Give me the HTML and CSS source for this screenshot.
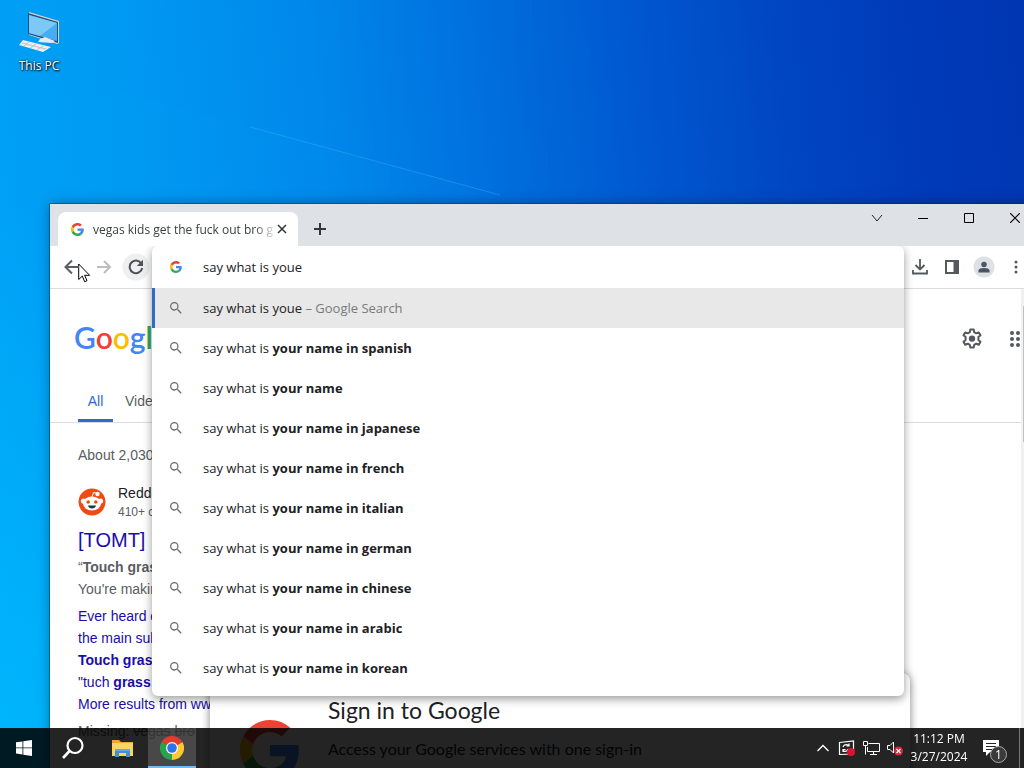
FILE: index.html
```html
<!DOCTYPE html>
<html lang="en">
<head>
  <meta charset="UTF-8">
  <meta name="viewport" content="width=device-width, initial-scale=1.0">
  <title>Desktop</title>
  <link rel="stylesheet" href="styles.css">
</head>
<body>
  <!-- Shared icons -->
  <svg class="defs" width="0" height="0" aria-hidden="true">
    <symbol id="g-logo" viewBox="0 0 48 48">
      <path fill="#EA4335" d="M24 9.5c3.5 0 6.700 1.200 9.200 3.600l6.900-6.900C35.900 2.400 30.500 0 24 0 14.600 0 6.500 5.400 2.600 13.200l8 6.200C12.400 13.700 17.700 9.500 24 9.500z"/>
      <path fill="#4285F4" d="M47 24.500c0-1.600-.2-3.100-.4-4.500H24v9h12.900c-.6 3-2.200 5.500-4.700 7.200l7.700 6C44.400 38 47 31.800 47 24.500z"/>
      <path fill="#FBBC05" d="M10.500 28.600a14.500 14.500 0 0 1 0-9.200l-8-6.200a24 24 0 0 0 0 21.600l8-6.200z"/>
      <path fill="#34A853" d="M24 48c6.500 0 11.900-2.100 15.900-5.800l-7.700-6c-2.200 1.500-4.900 2.300-8.200 2.300-6.300 0-11.600-4.200-13.500-9.900l-8 6.200C6.500 42.600 14.600 48 24 48z"/>
    </symbol>
    <symbol id="magnifier" viewBox="0 0 24 24">
      <path fill="#6b6f73" d="M15.500 14h-.8l-.3-.3A6.500 6.500 0 1 0 13.700 14.400l.3.300v.8l5 5 1.500-1.500-5-5zm-6 0a4.500 4.500 0 1 1 0-9 4.500 4.500 0 0 1 0 9z"/>
    </symbol>
  </svg>

  <!-- Faint light beam in the wallpaper -->
  <svg class="beam" viewBox="0 0 1024 768" preserveAspectRatio="none" aria-hidden="true">
    <path d="M250 127L500 195" stroke="#5cc4ff" stroke-opacity=".3"/>
    <path d="M100 86L500 195H0V59z" fill="#00b0ff" fill-opacity=".06"/>
  </svg>

  <a class="desktop-icon" href="#">
    <svg width="44" height="44" viewBox="0 0 44 44" aria-hidden="true">
      <path d="M12 1l30 9v22l-2 1L12 24z" fill="#d8d4c8"/>
      <path d="M11 2l30 9v21L11 23z" fill="#1d4f86"/>
      <path d="M12 4l28 8v18L12 22z" fill="#45adf0"/>
      <path d="M12 4l28 8-17 13-11-3z" fill="#7cc8f6"/>
      <path d="M23 28l5-2 10 4-3 2-14-1z" fill="#e9eaec"/>
      <path d="M6 29l28 7-8 5-24-7z" fill="#eceff1"/>
      <path d="M5 32l24 6M12 31l-5 4M19 33l-6 4M26 35l-6 4" stroke="#b9c4cd" fill="none"/>
    </svg>
    <span>This PC</span>
  </a>

  <main class="window">
    <header class="tab-strip">
      <div class="tab">
        <svg width="13" height="13"><use href="#g-logo"/></svg>
        <span class="tab-title">vegas kids get the fuck out bro g</span>
        <button class="tab-close" aria-label="Close tab">
          <svg width="10" height="10" viewBox="0 0 10 10"><path d="M1 1l8 8M9 1l-8 8" stroke="#2f3236" stroke-width="1.500"/></svg>
        </button>
      </div>
      <button class="new-tab" aria-label="New tab">
        <svg width="12" height="12" viewBox="0 0 12 12"><path d="M6 0v12M0 6h12" stroke="#33363a" stroke-width="2"/></svg>
      </button>
      <div class="window-buttons">
        <button aria-label="Search tabs"><svg width="12" height="12" viewBox="0 0 12 12"><path d="M1 3l5 6 5-6" fill="none" stroke="#222"/></svg></button>
        <button aria-label="Minimize"><svg width="10" height="10" viewBox="0 0 10 10"><path d="M0 5.500h10" stroke="#000"/></svg></button>
        <button aria-label="Maximize"><svg width="10" height="10" viewBox="0 0 10 10"><path d="M.5.5h9v9h-9z" fill="none" stroke="#000"/></svg></button>
        <button aria-label="Close"><svg width="10" height="10" viewBox="0 0 10 10"><path d="M0 0l10 10M10 0L0 10" stroke="#000" stroke-width="1.200"/></svg></button>
      </div>
    </header>

    <div class="toolbar">
      <button aria-label="Back"><svg width="16" height="16" viewBox="0 0 16 16"><path d="M15 8H2M8 1.500L1.500 8 8 14.500" fill="none" stroke="#5a5d61" stroke-width="2"/></svg></button>
      <button aria-label="Forward"><svg width="16" height="16" viewBox="0 0 16 16"><path d="M1 8h12M8 2l6 6-6 6" fill="none" stroke="#bbbdc0" stroke-width="2"/></svg></button>
      <button class="reload" aria-label="Reload"><svg width="16" height="16" viewBox="0 0 16 16"><path d="M13.200 4.300A6.300 6.300 0 1 0 14.200 9" fill="none" stroke="#4d5054" stroke-width="2"/><path d="M15 .8v6.200H8.800z" fill="#4d5054"/></svg></button>

      <div class="omnibox">
        <div class="popup">
          <div class="entry">
            <svg width="12" height="12"><use href="#g-logo"/></svg>
            <input type="text" aria-label="Search Google or type a URL" value="say what is youe">
          </div>
          <ul class="suggestions">
            <li><a class="selected" href="#"><svg width="16" height="16"><use href="#magnifier"/></svg><span>say what is youe <span class="hint">– Google Search</span></span></a></li>
            <li><a href="#"><svg width="16" height="16"><use href="#magnifier"/></svg><span>say what is <b>your name in spanish</b></span></a></li>
            <li><a href="#"><svg width="16" height="16"><use href="#magnifier"/></svg><span>say what is <b>your name</b></span></a></li>
            <li><a href="#"><svg width="16" height="16"><use href="#magnifier"/></svg><span>say what is <b>your name in japanese</b></span></a></li>
            <li><a href="#"><svg width="16" height="16"><use href="#magnifier"/></svg><span>say what is <b>your name in french</b></span></a></li>
            <li><a href="#"><svg width="16" height="16"><use href="#magnifier"/></svg><span>say what is <b>your name in italian</b></span></a></li>
            <li><a href="#"><svg width="16" height="16"><use href="#magnifier"/></svg><span>say what is <b>your name in german</b></span></a></li>
            <li><a href="#"><svg width="16" height="16"><use href="#magnifier"/></svg><span>say what is <b>your name in chinese</b></span></a></li>
            <li><a href="#"><svg width="16" height="16"><use href="#magnifier"/></svg><span>say what is <b>your name in arabic</b></span></a></li>
            <li><a href="#"><svg width="16" height="16"><use href="#magnifier"/></svg><span>say what is <b>your name in korean</b></span></a></li>
          </ul>
        </div>
      </div>

      <button aria-label="Downloads"><svg width="16" height="16" viewBox="0 0 16 16"><path d="M8 0v10M3.500 6L8 10.500 12.500 6M1 11v3.500h14V11" fill="none" stroke="#55585c" stroke-width="1.800"/></svg></button>
      <button aria-label="Side panel"><svg width="14" height="14" viewBox="0 0 14 14"><path d="M1 1h12v12H1z" fill="none" stroke="#55585c" stroke-width="2"/><path d="M8.500 1H13v12H8.500z" fill="#55585c"/></svg></button>
      <button class="profile" aria-label="Profile"><svg width="12" height="12" viewBox="0 0 14 14"><circle cx="7" cy="4" r="3.200" fill="#4b5563"/><path d="M.5 13.500v-2C.5 9 4 8.300 7 8.300s6.500.7 6.500 3.200v2z" fill="#4b5563"/></svg></button>
      <button aria-label="Menu"><svg width="4" height="14" viewBox="0 0 4 14"><circle cx="2" cy="2" r="1.500" fill="#55585c"/><circle cx="2" cy="7" r="1.500" fill="#55585c"/><circle cx="2" cy="12" r="1.500" fill="#55585c"/></svg></button>
    </div>

    <div class="viewport">
      <section class="page">
        <div class="page-header">
          <a class="google" href="#"><span class="blue">G</span><span class="red">o</span><span class="yellow">o</span><span class="blue">g</span><span class="green">l</span><span class="red">e</span></a>
          <div class="page-tools">
            <button aria-label="Settings"><svg width="22" height="22" viewBox="0 0 22 22"><path d="M9.300 1.500h3.400l.5 2.700 2 1.100 2.600-.9 1.700 2.900-2.100 1.800v2.900l2.100 1.700-1.700 3-2.600-1-2 1.200-.5 2.600H9.300l-.5-2.600-2-1.200-2.600 1-1.700-3L4.600 12V9.100L2.500 7.300l1.700-2.900 2.600.9 2-1.100z" fill="none" stroke="#55585c" stroke-width="2" stroke-linejoin="round"/><circle cx="11" cy="10.600" r="3.200" fill="#55585c"/></svg></button>
            <button aria-label="Google apps"><svg width="16" height="16" viewBox="0 0 16 16" fill="#55585c"><circle cx="2" cy="2" r="2"/><circle cx="8" cy="2" r="2"/><circle cx="14" cy="2" r="2"/><circle cx="2" cy="8" r="2"/><circle cx="8" cy="8" r="2"/><circle cx="14" cy="8" r="2"/><circle cx="2" cy="14" r="2"/><circle cx="8" cy="14" r="2"/><circle cx="14" cy="14" r="2"/></svg></button>
          </div>
        </div>
        <nav class="page-tabs">
          <a class="active" href="#">All</a>
          <a href="#">Videos</a>
        </nav>

        <div class="results">
          <p class="stats">About 2,030</p>
          <div class="source">
            <svg width="28" height="28" viewBox="0 0 28 28" aria-hidden="true">
              <circle cx="14" cy="14" r="13.500" fill="#f04a12"/>
              <path d="M14 9l1.500-4.500 4 1" fill="none" stroke="#fff"/>
              <circle cx="19.500" cy="6" r="2.200" fill="#fff"/>
              <circle cx="5.500" cy="13" r="2.600" fill="#fff"/>
              <circle cx="22.500" cy="13" r="2.600" fill="#fff"/>
              <ellipse cx="14" cy="15.500" rx="9" ry="7" fill="#fff"/>
              <circle cx="10.200" cy="14" r="1.800" fill="#f04a12"/>
              <circle cx="17.800" cy="14" r="1.800" fill="#f04a12"/>
              <path d="M10 17.500h8c-.5 4-7.500 4-8 0z" fill="#173b3f"/>
            </svg>
            <div>
              <div class="site">Reddit</div>
              <div class="meta">410+ comments</div>
            </div>
          </div>
          <h3><a href="#">[TOMT]</a></h3>
          <p class="snippet">“<b>Touch grass</b><br>You're making</p>
          <ul class="more">
            <li><a href="#">Ever heard of</a></li>
            <li><a href="#">the main sub</a></li>
            <li><a href="#"><b>Touch grass</b></a></li>
            <li><a href="#">"tuch <b>grass</b></a></li>
            <li><a href="#">More results from www.reddit.com</a></li>
          </ul>
          <p class="missing">Missing: <s>vegas</s> <s>bro</s></p>
        </div>

        <div class="signin">
          <svg width="60" height="60" aria-hidden="true"><use href="#g-logo"/></svg>
          <div>
            <h2>Sign in to Google</h2>
            <p>Access your Google services with one sign-in</p>
          </div>
        </div>
      </section>
      <div class="scrollbar"><div class="thumb"></div></div>
    </div>
  </main>

  <footer class="taskbar">
    <button class="start" aria-label="Start"><svg width="16" height="16" viewBox="0 0 16 16"><path d="M0 2.300l6.500-.9v6.100H0zM7.300 1.300L16 0v7.500H7.300zM0 8.300h6.500v6.200L0 13.600zM7.300 8.300H16V16l-8.700-1.300z" fill="#fff"/></svg></button>
    <button class="task" aria-label="Search"><svg width="24" height="24" viewBox="0 0 24 24"><circle cx="14" cy="9.500" r="7.500" fill="none" stroke="#fff" stroke-width="2.200"/><path d="M8.500 15L2 22" stroke="#fff" stroke-width="2.600"/></svg></button>
    <button class="task" aria-label="File Explorer"><svg width="24" height="20" viewBox="0 0 24 20"><path d="M1 2h7l2 2h12v14H1z" fill="#e9a92f"/><path d="M1 5h21v13H1z" fill="#fbd467"/><path d="M4 11h15v8h-4v-4H8v4H4z" fill="#4490cf"/><path d="M4 11h15v2H4z" fill="#62abe0"/></svg></button>
    <button class="start active" aria-label="Google Chrome"><svg width="24" height="24" viewBox="0 0 24 24"><path d="M12 12L1.600 6A12 12 0 0 1 22.400 6z" fill="#e33b2e"/><path d="M12 12l10.400-6A12 12 0 0 1 12 24z" fill="#fcc934"/><path d="M12 12v12A12 12 0 0 1 1.600 6z" fill="#2ba24c"/><path d="M12 6h10.400L12 12z" fill="#e33b2e"/><path d="M17.200 15L12 24v-9z" fill="#fcc934"/><path d="M1.600 6l5.200 9L12 12z" fill="#2ba24c"/><circle cx="12" cy="12" r="6" fill="#fff"/><circle cx="12" cy="12" r="4.800" fill="#2b76e5"/></svg></button>

    <div class="tray">
      <button aria-label="Show hidden icons"><svg width="12" height="8" viewBox="0 0 12 8"><path d="M.5 7L6 1.500 11.500 7" fill="none" stroke="#fff" stroke-width="1.300"/></svg></button>
      <button aria-label="Update status"><svg width="18" height="16" viewBox="0 0 18 16"><path d="M1.500 2.500L15.500 1v13l-14 .5z" fill="none" stroke="#fff" stroke-width="1.200"/><path d="M5 7c1-3 5-3 6-1M11 3.500V6H8.500M10 9c-1 3-4 3-5 1M5 12V9.500h2.500" fill="none" stroke="#fff" stroke-width="1.200"/><circle cx="13" cy="12" r="4" fill="#dd1230"/></svg></button>
      <button aria-label="Network"><svg width="17" height="14" viewBox="0 0 17 14"><path d="M5.500 2.500h11v8h-12V6M10.500 10.500v3M7 13.500h7M.5.500h4v4h-4zM2.500 4.500v9" fill="none" stroke="#fff"/></svg></button>
      <button aria-label="Volume muted"><svg width="18" height="16" viewBox="0 0 18 16"><path d="M1.500 5.500H4L7.500 2v11L4 9.500H1.500z" fill="none" stroke="#fff"/><circle cx="12.500" cy="11" r="4.500" fill="#d7263d"/><path d="M10.500 9l4 4M14.500 9l-4 4" stroke="#fff" stroke-width="1.200"/></svg></button>
      <button class="clock"><span>11:12 PM</span><span>3/27/2024</span></button>
      <button class="notifications" aria-label="1 new notification">
        <svg width="17" height="17" viewBox="0 0 17 17"><path d="M0 0h16v12H7l-4 4v-4H0z" fill="#fff"/><path d="M3 3.500h10M3 6.500h10M3 9.500h7" stroke="#252525"/></svg>
        <span class="badge">1</span>
      </button>
      <button class="show-desktop" aria-label="Show desktop"></button>
    </div>
  </footer>

  <svg class="cursor" width="13" height="20" viewBox="0 0 13 20" aria-hidden="true"><path d="M.7 1v15.500l3.600-3.400 2.400 5.600 2.300-1-2.400-5.400h5z" fill="#fff" stroke="#000"/></svg>
</body>
</html>
```
FILE: styles.css
```css
* {
  box-sizing: border-box;
}
body {
  margin: 0;
  height: 100vh;
  overflow: hidden;
  position: relative;
  font-family: "Open Sans", "Noto Sans", sans-serif;
  font-size: 13px;
  color: #202124;
  background:
    linear-gradient(200deg, transparent 50%, rgba(0, 195, 255, 0.6) 100%),
    linear-gradient(84deg, #00a4f8 0%, #0099f2 18%, #0088ea 35%, #0070de 50%, #0058d0 64%, #0045c2 78%, #003ab8 90%, #0036b2 100%);
}
button {
  border: none;
  background: none;
  padding: 0;
  display: flex;
  align-items: center;
  justify-content: center;
  font: inherit;
  color: inherit;
}
a {
  text-decoration: none;
  color: inherit;
}
ul {
  list-style: none;
  margin: 0;
  padding: 0;
}
p, h2, h3 {
  margin: 0;
  font-weight: normal;
}
svg {
  flex: none;
}
.defs {
  position: absolute;
}

/* Desktop */
.beam {
  position: absolute;
  width: 100%;
  height: 100%;
}
.desktop-icon {
  position: relative;
  display: flex;
  flex-direction: column;
  align-items: center;
  width: 78px;
  padding-top: 11px;
  gap: 2px;
  font-size: 12px;
  line-height: 18px;
  color: #fff;
  text-shadow: 1px 1px 2px #000, 0 0 2px #000;
}
.cursor {
  position: absolute;
  left: 78px;
  top: 263px;
}

/* Browser window */
.window {
  position: absolute;
  left: 50px;
  right: -14px;
  top: 204px;
  bottom: 0;
  display: flex;
  flex-direction: column;
  background: #fff;
  box-shadow: 0 0 0 1px rgba(0, 40, 80, 0.4), 0 0 12px rgba(0, 0, 0, 0.35);
}
.tab-strip {
  display: flex;
  align-items: flex-end;
  height: 42px;
  padding-left: 8px;
  background: #dee1e6;
}
.tab {
  display: flex;
  align-items: center;
  width: 240px;
  height: 34px;
  padding: 0 8px 0 13px;
  gap: 9px;
  background: #fff;
  border-radius: 8px 8px 0 0;
  font-size: 12px;
  color: #3c4043;
}
.tab-title {
  flex: 1;
  overflow: hidden;
  white-space: nowrap;
  mask-image: linear-gradient(to right, #000 90%, rgba(0, 0, 0, 0.2));
}
.tab-close {
  width: 16px;
  height: 16px;
  margin-left: -8px;
}
.new-tab {
  width: 28px;
  height: 34px;
  margin-left: 8px;
}
.window-buttons {
  display: flex;
  align-self: flex-start;
  margin-left: auto;
}
.window-buttons button {
  width: 46px;
  height: 28px;
}
.toolbar {
  display: flex;
  align-items: center;
  height: 43px;
  padding: 0 6px;
  border-bottom: 1px solid #dadce0;
  position: relative;
  z-index: 2;
}
.toolbar > button {
  width: 32px;
  height: 28px;
}
.toolbar > .reload {
  background: radial-gradient(circle, #eeeff0 13px, transparent 14px);
}
.toolbar > .profile {
  background: radial-gradient(circle, #dde1e6 10px, transparent 11px);
}

/* Address box and its suggestions */
.omnibox {
  flex: 1;
  align-self: stretch;
  position: relative;
}
.popup {
  position: absolute;
  top: 0;
  left: 0;
  right: 0;
  padding-bottom: 8px;
  background: #fff;
  border-radius: 6px;
  box-shadow: 0 3px 10px rgba(0, 0, 0, 0.4);
  clip-path: inset(0 -20px -20px -20px);
}
.entry {
  display: flex;
  align-items: center;
  height: 42px;
  padding-left: 18px;
  gap: 21px;
}
.entry input {
  flex: 1;
  border: none;
  outline: none;
  padding: 0;
  background: none;
  font: inherit;
  color: inherit;
}
.suggestions a {
  display: flex;
  align-items: center;
  height: 40px;
  padding-left: 16px;
  gap: 19px;
}
.suggestions .selected {
  background: #e8e8e8;
  box-shadow: inset 3px 0 #2f6bc9;
}
.hint {
  color: #777a7d;
}

/* Search results page */
.viewport {
  flex: 1;
  display: flex;
  min-height: 0;
}
.page {
  flex: 1;
  min-width: 0;
  position: relative;
  overflow: hidden;
  font-family: "Liberation Sans", Arial, sans-serif;
  font-size: 14px;
  color: #5a5d61;
}
.page-header {
  display: flex;
  align-items: center;
  justify-content: space-between;
  height: 99px;
  padding-left: 24px;
}
.google {
  font-family: Lato, sans-serif;
  font-size: 30px;
  font-weight: 600;
  line-height: 36px;
  padding-bottom: 4px;
}
.blue { color: #4285f4; }
.red { color: #ea4335; }
.yellow { color: #fbbc05; }
.green { color: #34a853; }
.page-tools {
  display: flex;
  gap: 27px;
  margin-right: -5px;
}
.page-tabs {
  display: flex;
  height: 35px;
  padding-left: 28px;
  gap: 12px;
  border-bottom: 1px solid #dadce0;
  line-height: 26px;
}
.page-tabs a {
  height: 34px;
}
.page-tabs .active {
  width: 35px;
  text-align: center;
  color: #2f6bc9;
  border-bottom: 3px solid #2f6bc9;
}
.results {
  padding: 20px 28px;
  line-height: 22px;
}
.stats {
  line-height: 24px;
}
.source {
  display: flex;
  align-items: center;
  gap: 12px;
  padding: 16px 0 5px;
}
.site {
  line-height: 20px;
  color: #202124;
}
.meta {
  font-size: 12px;
  line-height: 18px;
}
h3 {
  font-size: 20px;
  line-height: 28px;
}
h3 a, .more a {
  color: #1a0dab;
}
.snippet {
  padding-top: 2px;
}
.more {
  padding: 5px 0;
}

/* Sign-in card */
.signin {
  position: absolute;
  left: 160px;
  right: 111px;
  top: 384px;
  bottom: -40px;
  display: flex;
  gap: 28px;
  padding: 20px 30px;
  background: #fff;
  border-radius: 8px;
  box-shadow: 0 1px 8px rgba(0, 0, 0, 0.5);
  font-family: Lato, sans-serif;
  color: #202124;
}
.signin svg {
  margin-top: 27px;
}
.signin h2 {
  font-size: 23px;
  line-height: 34px;
}
.signin p {
  font-size: 16px;
  line-height: 24px;
  padding-top: 10px;
}
.scrollbar {
  width: 17px;
  padding: 17px 2px;
  background: #f1f1f1;
}
.thumb {
  height: 136px;
  background: #c1c1c1;
}

/* Taskbar */
.taskbar {
  position: fixed;
  left: 0;
  right: 0;
  bottom: 0;
  z-index: 3;
  display: flex;
  height: 40px;
  background: rgba(0, 0, 0, 0.86);
  color: #fff;
  font-size: 12px;
}
.start {
  width: 48px;
}
.task {
  width: 50px;
}
.active.start {
  background: rgba(255, 255, 255, 0.16);
  box-shadow: inset 0 -2px #76b9ed;
}
.tray {
  display: flex;
  margin-left: auto;
}
.tray button {
  width: 24px;
}
.tray .clock {
  width: 64px;
  flex-direction: column;
  line-height: 18px;
}
.tray .notifications {
  width: 48px;
  padding-right: 8px;
  position: relative;
}
.badge {
  position: absolute;
  left: 19px;
  top: 18px;
  width: 17px;
  height: 17px;
  border: 1px solid #aaa;
  border-radius: 50%;
  background: #3a3a3a;
  line-height: 15px;
  text-align: center;
}
.tray .show-desktop {
  width: 5px;
  border-left: 1px solid #777;
}
```
